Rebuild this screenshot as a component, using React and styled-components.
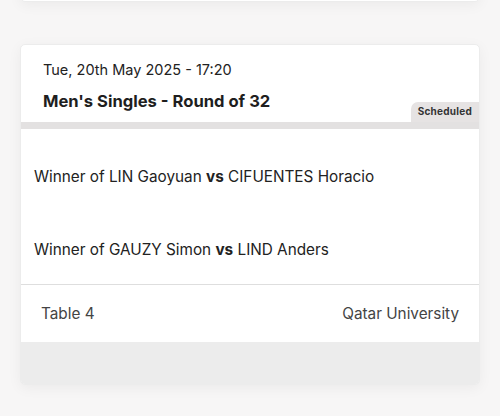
import React from "react";
import styled, { createGlobalStyle } from "styled-components";

const Global = createGlobalStyle`
  html, body {
    margin: 0;
    padding: 0;
    background: #f7f6f6;
    font-family: Inter, "Liberation Sans", sans-serif;
    color: #222;
  }
`;

const Page = styled.div`
  width: 500px;
  height: 416px;
  overflow: hidden;
  padding: 0 20px;
  box-sizing: border-box;
  display: flex;
  flex-direction: column;
  gap: 42px;
`;

const Card = styled.div`
  background: #fff;
  border: 1px solid #ececec;
  border-radius: 5px;
  box-shadow: 0 3px 14px rgba(0, 0, 0, 0.05);
  overflow: hidden;
  flex-shrink: 0;
`;

const PrevCard = styled(Card)`
  height: 40px;
  margin-top: -40px;
`;

const Header = styled.div`
  position: relative;
  padding: 16px 22px 0;
  height: 77px;
  box-sizing: border-box;
`;

const DateLine = styled.div`
  font-size: 14.5px;
  line-height: 18px;
  color: #222;
`;

const Title = styled.div`
  margin-top: 12px;
  font-size: 16.6px;
  line-height: 20px;
  font-weight: 700;
  color: #1e1e1e;
`;

const Status = styled.span`
  position: absolute;
  right: 0;
  bottom: 0;
  background: #e6e3e3;
  border-top-left-radius: 7px;
  padding: 4px 7px 5px 7px;
  font-size: 10px;
  line-height: 11px;
  font-weight: 700;
  color: #333;
  letter-spacing: 0.25px;
`;

const Band = styled.div`
  height: 7px;
  background: #e3e1e1;
`;

const Matches = styled.div`
  display: flex;
  flex-direction: column;
  gap: 3px;
  padding-top: 12px;
  border-bottom: 1px solid #dedede;
`;

const Match = styled.div`
  height: 70px;
  display: flex;
  align-items: center;
  padding: 0 13px;
  font-size: 15.3px;
  color: #222;
  b {
    font-weight: 700;
  }
`;

const Footer = styled.div`
  height: 57px;
  display: flex;
  justify-content: space-between;
  align-items: center;
  padding: 0 20px;
  font-size: 15.3px;
  color: #444;
`;

const Bottom = styled.div`
  height: 42px;
  background: #ececec;
`;

function MatchLine({ a, b }) {
  return (
    <Match>
      <span>
        {a} <b>vs</b> {b}
      </span>
    </Match>
  );
}

export default function App() {
  return (
    <>
      <Global />
      <Page>
        <PrevCard />
        <Card>
          <Header>
            <DateLine>Tue, 20th May 2025 - 17:20</DateLine>
            <Title>Men's Singles - Round of 32</Title>
            <Status>Scheduled</Status>
          </Header>
          <Band />
          <Matches>
            <MatchLine a="Winner of LIN Gaoyuan" b="CIFUENTES Horacio" />
            <MatchLine a="Winner of GAUZY Simon" b="LIND Anders" />
          </Matches>
          <Footer>
            <span>Table 4</span>
            <span>Qatar University</span>
          </Footer>
          <Bottom />
        </Card>
      </Page>
    </>
  );
}
